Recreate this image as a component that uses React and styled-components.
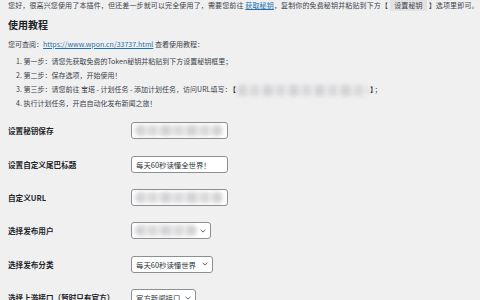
import styled, { createGlobalStyle } from "styled-components";

const GlobalStyle = createGlobalStyle`
  html, body {
    margin: 0;
    padding: 0;
    background: #f0f0f1;
  }
  body {
    font-family: "Noto Sans CJK SC", "Noto Sans", sans-serif;
    color: #3c434a;
    overflow: hidden;
  }
`;

const Page = styled.div`
  padding: 0 8px;
  width: 480px;
  height: 300px;
  box-sizing: border-box;
  overflow: hidden;
`;

const Note = styled.p`
  margin: 0;
  font-size: 7px;
  line-height: 10px;
  white-space: nowrap;
`;

const TopNote = styled(Note)`
  letter-spacing: 0.14px;
`;

const Link = styled.a`
  color: #2271b1;
  text-decoration: underline;
  text-decoration-thickness: 0.5px;
`;

const Code = styled.code`
  font-family: inherit;
  background: #e2e2e3;
  padding: 1px 4px;
  margin: 0 2px;
`;

const Heading = styled.h2`
  margin: 9px 0 0;
  font-size: 10px;
  line-height: 12px;
  font-weight: 700;
  color: #1d2327;
`;

const Intro = styled(Note)`
  margin-top: 8px;
`;

const Steps = styled.ol`
  margin: 5px 0 0;
  padding: 0 0 0 8px;
  list-style: decimal inside;
  font-size: 7px;
  line-height: 14px;
  white-space: nowrap;
`;

const Blurred = styled.span`
  display: inline-block;
  vertical-align: middle;
  width: ${(p) => p.$w}px;
  height: ${(p) => p.$h || 10}px;
  border-radius: 5px;
  background:
    repeating-linear-gradient(90deg, #d3d3d5 0 9px, #e6e6e7 9px 14px, #d9d9db 14px 22px, #ececed 22px 26px);
  filter: blur(2px);
`;

const Bracket = styled.span`
  font-weight: 700;
  color: #1d2327;
  margin: 0 1px;
`;

const Form = styled.div`
  margin-top: 4px;
`;

const Row = styled.div`
  display: grid;
  grid-template-columns: 123px auto;
  align-items: center;
  height: 33.4px;
`;

const Label = styled.label`
  font-size: 7.6px;
  font-weight: 700;
  color: #1d2327;
  white-space: nowrap;
`;

const Field = styled.div`
  box-sizing: border-box;
  width: ${(p) => p.$w}px;
  height: 17px;
  background: #fff;
  border: 1px solid #8c8f94;
  border-radius: 3px;
  display: flex;
  align-items: center;
  justify-content: space-between;
  padding: 0 4px 0 3px;
  font-size: 7.4px;
  color: #2c3338;
  white-space: nowrap;
  overflow: hidden;
`;

const Value = styled.span`
  padding-left: 1px;
`;

const Chevron = () => (
  <svg width="6" height="4" viewBox="0 0 6 4">
    <path d="M0.6 0.8 L3 3.1 L5.4 0.8" fill="none" stroke="#50575e" strokeWidth="0.9" />
  </svg>
);

const steps = [
  "第一步：请您先获取免费的Token秘钥并粘贴到下方设置秘钥框里；",
  "第二步：保存选项，开始使用！",
  null,
  "执行计划任务，开启自动化发布新闻之旅！",
];

export default function App() {
  return (
    <Page>
      <GlobalStyle />
      <TopNote>
        您好，很高兴您使用了本插件，但还差一步就可以完全使用了，需要您前往 <Link href="#">获取秘钥</Link>，复制你的免费秘钥并粘贴到下方【<Code>设置秘钥</Code>】选项里即可。
      </TopNote>
      <Heading>使用教程</Heading>
      <Intro>
        您可查阅：<Link href="#">https://www.wpon.cn/33737.html</Link> 查看使用教程：
      </Intro>
      <Steps>
        {steps.map((s, i) =>
          s ? (
            <li key={i}>{s}</li>
          ) : (
            <li key={i}>
              第三步：请您前往 宝塔 - 计划任务 - 添加计划任务，访问URL填写：<Bracket>【</Bracket>
              <Blurred $w={132} $h={11} />
              <Bracket>】</Bracket>；
            </li>
          )
        )}
      </Steps>
      <Form>
        <Row>
          <Label>设置秘钥保存</Label>
          <Field $w={97}>
            <Blurred $w={88} $h={11} />
          </Field>
        </Row>
        <Row>
          <Label>设置自定义尾巴标题</Label>
          <Field $w={97}>
            <Value>每天60秒读懂全世界！</Value>
          </Field>
        </Row>
        <Row>
          <Label>自定义URL</Label>
          <Field $w={97}>
            <Blurred $w={88} $h={11} />
          </Field>
        </Row>
        <Row>
          <Label>选择发布用户</Label>
          <Field $w={80}>
            <Blurred $w={62} $h={11} />
            <Chevron />
          </Field>
        </Row>
        <Row>
          <Label>选择发布分类</Label>
          <Field $w={82}>
            <Value>每天60秒读懂世界</Value>
            <Chevron />
          </Field>
        </Row>
        <Row>
          <Label>选择上游接口（暂时只有官方）</Label>
          <Field $w={65}>
            <Value>官方新闻接口</Value>
            <Chevron />
          </Field>
        </Row>
      </Form>
    </Page>
  );
}
